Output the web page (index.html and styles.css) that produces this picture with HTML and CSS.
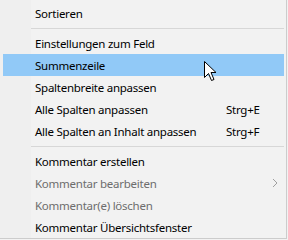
FILE: index.html
```html
<!DOCTYPE html>
<html lang="de">
<head>
<meta charset="utf-8">
<link rel="stylesheet" href="styles.css">
</head>
<body>
<div class="menu">
  <div class="item"><span class="label">Sortieren</span></div>
  <div class="sep"></div>
  <div class="item"><span class="label">Einstellungen zum Feld</span></div>
  <div class="item hover"><span class="label">Summenzeile</span></div>
  <div class="item"><span class="label">Spaltenbreite anpassen</span></div>
  <div class="item"><span class="label">Alle Spalten anpassen</span><span class="key">Strg+E</span></div>
  <div class="item"><span class="label">Alle Spalten an Inhalt anpassen</span><span class="key">Strg+F</span></div>
  <div class="sep"></div>
  <div class="item"><span class="label">Kommentar erstellen</span></div>
  <div class="item disabled"><span class="label">Kommentar bearbeiten</span><span class="sub">
    <svg width="6" height="10" viewBox="0 0 6 10"><path d="M1 1 L5 5 L1 9" fill="none" stroke="#a0a0a0" stroke-width="1"/></svg></span></div>
  <div class="item disabled"><span class="label">Kommentar(e) löschen</span></div>
  <div class="item"><span class="label">Kommentar Übersichtsfenster</span></div>
  <svg class="cursor" width="13" height="20" viewBox="0 0 13 20">
    <path d="M0.5 0.5 L0.5 16.5 L4.5 12.5 L7.5 19.5 L10 18.5 L7 11.5 L12 11.5 Z" fill="#ffffff" stroke="#000000" stroke-width="1" stroke-linejoin="miter"/>
  </svg>
</div>
</body>
</html>
```
FILE: styles.css
```css
html, body {
  margin: 0;
  padding: 0;
  background: #f2f2f2;
}
.menu {
  position: relative;
  width: 286px;
  height: 236px;
  padding-top: 2px;
  background: linear-gradient(to right, #efefef 0, #efefef 31px, #f2f2f2 31px);
  border-right: 1px solid #cccccc;
  border-bottom: 1px solid #cccccc;
  font-family: "Noto Sans", "Open Sans", sans-serif;
  font-size: 11.5px;
  letter-spacing: -0.25px;
  color: #000000;
  display: flex;
  flex-direction: column;
}
.item {
  height: 22px;
  margin: 0 2px 0 3px;
  padding: 0 18px 0 32px;
  display: flex;
  align-items: center;
  justify-content: space-between;
  white-space: nowrap;
}
.item.hover {
  background: #91c9f7;
}
.item.disabled {
  color: #6d6d6d;
}
.key {
  width: 40px;
}
.sub {
  display: flex;
  align-items: center;
  margin-right: -12px;
}
.sep {
  height: 8px;
  margin: 0 2px 0 31px;
  display: flex;
  align-items: center;
}
.sep::after {
  content: "";
  flex: 1;
  height: 1px;
  background: #d7d7d7;
}
.cursor {
  position: absolute;
  left: 204px;
  top: 61px;
}
```
